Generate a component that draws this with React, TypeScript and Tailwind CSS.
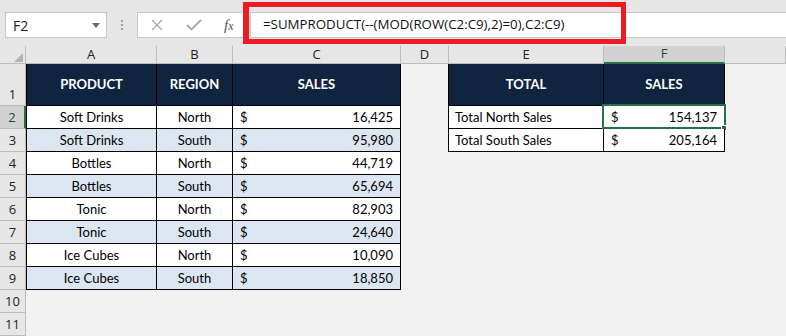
import React from "react";

const rows: [string, string, string][] = [
  ["Soft Drinks", "North", "16,425"],
  ["Soft Drinks", "South", "95,980"],
  ["Bottles", "North", "44,719"],
  ["Bottles", "South", "65,694"],
  ["Tonic", "North", "82,903"],
  ["Tonic", "South", "24,640"],
  ["Ice Cubes", "North", "10,090"],
  ["Ice Cubes", "South", "18,850"],
];

const totals: [string, string][] = [
  ["Total North Sales", "154,137"],
  ["Total South Sales", "205,164"],
];

const colLetters = ["A", "B", "C", "D", "E", "F", ""];

function ColHeader({ letter }: { letter: string }) {
  if (letter === "F") {
    return (
      <div className="flex items-center justify-center bg-[#d2d2d2] border-r border-[#bdbdbd] border-b-2 border-b-[#217346] text-[13px] text-[#1e4d33] font-['Open_Sans',sans-serif]">
        {letter}
      </div>
    );
  }
  return (
    <div className="flex items-center justify-center bg-[#e6e6e6] border-r border-b border-[#bdbdbd] text-[13px] text-[#222] font-['Open_Sans',sans-serif]">
      {letter}
    </div>
  );
}

function RowHeader({ n }: { n: number }) {
  const sel = n === 2;
  return (
    <div
      className={
        "flex items-end justify-center pb-[1px] border-b border-[#bdbdbd] text-[13px] font-['Open_Sans',sans-serif] " +
        (sel
          ? "bg-[#d2d2d2] border-r-2 border-r-[#217346] text-[#1e4d33]"
          : "bg-[#e6e6e6] border-r border-r-[#bdbdbd] text-[#222]")
      }
    >
      {n}
    </div>
  );
}

const base = "flex items-center whitespace-nowrap overflow-visible text-[13px] text-black font-[Lato,sans-serif]";
const navy = "bg-[#0f243e] text-white font-bold text-[11px] justify-center border-r border-b border-black";
const sheet = "bg-[#f1f1f1]";

function Money({ value }: { value: string }) {
  return (
    <div className="flex w-full justify-between pl-[7px] pr-[7px]">
      <span>$</span>
      <span>{value}</span>
    </div>
  );
}

export default function App() {
  const cells: React.ReactNode[] = [];

  cells.push(
    <div key="corner" className="flex items-end justify-end pr-[2px] pb-[1px] bg-[#e6e6e6] border-r border-b border-[#bdbdbd]">
      <svg width="9" height="9" viewBox="0 0 9 9">
        <polygon points="9,0 9,9 0,9" fill="#b4b4b4" />
      </svg>
    </div>
  );
  colLetters.forEach((l, i) => cells.push(<ColHeader key={"ch" + i} letter={l} />));

  for (let r = 1; r <= 11; r++) {
    cells.push(<RowHeader key={"rh" + r} n={r} />);
    const alt = r >= 2 && r <= 9 && r % 2 === 1;
    const rowBg = alt ? "bg-[#dce6f1]" : "bg-white";
    const tbl = "border-r border-b border-black " + rowBg;
    if (r === 1) {
      cells.push(<div key={`a${r}`} className={`${base} ${navy} border-l`}>PRODUCT</div>);
      cells.push(<div key={`b${r}`} className={`${base} ${navy}`}>REGION</div>);
      cells.push(<div key={`c${r}`} className={`${base} ${navy}`}>SALES</div>);
    } else if (r <= 9) {
      const d = rows[r - 2];
      cells.push(<div key={`a${r}`} className={`${base} ${tbl} border-l justify-center pt-[1px]`}>{d[0]}</div>);
      cells.push(<div key={`b${r}`} className={`${base} ${tbl} justify-center pt-[1px]`}>{d[1]}</div>);
      cells.push(<div key={`c${r}`} className={`${base} ${tbl} pt-[1px]`}><Money value={d[2]} /></div>);
    } else {
      cells.push(<div key={`a${r}`} className={sheet} />);
      cells.push(<div key={`b${r}`} className={sheet} />);
      cells.push(<div key={`c${r}`} className={sheet} />);
    }
    cells.push(<div key={`d${r}`} className={sheet + (r <= 3 ? " border-r border-black" : "")} />);
    if (r === 1) {
      cells.push(<div key={`e${r}`} className={`${base} ${navy}`}>TOTAL</div>);
      cells.push(<div key={`f${r}`} className={`${base} ${navy}`}>SALES</div>);
    } else if (r <= 3) {
      const t = totals[r - 2];
      cells.push(<div key={`e${r}`} className={`${base} border-r border-b border-black bg-white pl-[6px] pt-[1px]`}>{t[0]}</div>);
      cells.push(
        <div key={`f${r}`} className={`${base} border-r border-b border-black bg-white pt-[1px] relative`}>
          <Money value={t[1]} />
          {r === 2 && (
            <>
              <div className="absolute left-[-2px] top-[-2px] w-[124px] h-[25px] border-2 border-[#217346] pointer-events-none" />
              <div className="absolute left-[117px] top-[19px] w-[6px] h-[6px] bg-[#217346] border border-white" />
            </>
          )}
        </div>
      );
    } else {
      cells.push(<div key={`e${r}`} className={sheet} />);
      cells.push(<div key={`f${r}`} className={sheet} />);
    }
    cells.push(<div key={`g${r}`} className={sheet} />);
  }

  return (
    <div className="relative w-[786px] h-[336px] overflow-hidden bg-[#e6e6e6]">
      <div className="h-[46px] pt-[12px]">
        <div className="flex h-[26px]">
          <div className="ml-[5px] w-[102px] h-full bg-white border border-[#c6c6c6] flex items-center justify-between pl-[7px] pr-[6px]">
            <span className="text-[14px] text-[#222] font-['Open_Sans',sans-serif]">F2</span>
            <svg width="8" height="5" viewBox="0 0 8 5">
              <polygon points="0,0 8,0 4,5" fill="#6d6d6d" />
            </svg>
          </div>
          <div className="w-[30px] flex flex-col items-center justify-center gap-[2px]">
            <div className="w-[2px] h-[2px] bg-[#a0a0a0]" />
            <div className="w-[2px] h-[2px] bg-[#a0a0a0]" />
            <div className="w-[2px] h-[2px] bg-[#a0a0a0]" />
          </div>
          <div className="w-[110px] h-full bg-white border border-[#c6c6c6] flex items-center">
            <svg className="ml-[13px]" width="12" height="12" viewBox="0 0 12 12">
              <path d="M1 1 L11 11 M11 1 L1 11" stroke="#a8a8a8" strokeWidth="1.4" fill="none" />
            </svg>
            <svg className="ml-[23px]" width="16" height="12" viewBox="0 0 16 12">
              <path d="M1 6 L5.5 10.5 L15 1" stroke="#a8a8a8" strokeWidth="1.8" fill="none" />
            </svg>
            <span className="ml-[22px] text-[15px] italic text-[#555] font-['Liberation_Serif',serif] leading-none">
              f<span className="text-[12px]">x</span>
            </span>
          </div>
          <div className="ml-[3px] flex-1 h-full bg-white border-y border-l border-[#c6c6c6] flex items-center pl-[12px]">
            <span className="text-[13.3px] text-[#111] font-['Open_Sans',sans-serif] whitespace-nowrap">
              =SUMPRODUCT(--(MOD(ROW(C2:C9),2)=0),C2:C9)
            </span>
          </div>
        </div>
      </div>

      <div className="grid grid-cols-[26px_131px_76px_168px_48px_155px_121px_61px] grid-rows-[18px_42px_repeat(10,23px)]">
        {cells}
      </div>

      <div className="absolute left-[243px] top-[2px] w-[383px] h-[42px] border-[5px] border-l-[6px] border-[#ed1c24] pointer-events-none" />
    </div>
  );
}
